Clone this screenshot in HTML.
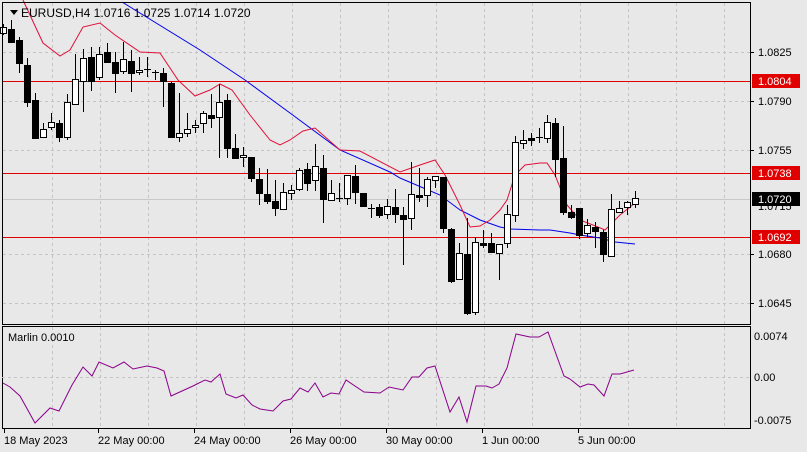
<!DOCTYPE html>
<html><head><meta charset="utf-8"><style>
html,body{margin:0;padding:0;background:#e8e8e8;}
svg{display:block;font-family:"Liberation Sans",sans-serif;}
</style></head><body>
<svg id="s" width="807" height="452" viewBox="0 0 807 452" xmlns="http://www.w3.org/2000/svg">
<rect width="807" height="452" fill="#e8e8e8"/>
<g id="grid" stroke="#c4c4c4" stroke-dasharray="3,3" stroke-width="1"></g>
<line x1="2" y1="199.5" x2="750" y2="199.5" stroke="#c8c8c8"/>
<g stroke="#e00000" stroke-width="1">
<line x1="2" y1="81.5" x2="750" y2="81.5"/>
<line x1="2" y1="173.5" x2="750" y2="173.5"/>
<line x1="2" y1="237.5" x2="750" y2="237.5"/>
</g>
<polyline fill="none" stroke="#0000ee" stroke-width="1" points="122,2 200,50 245,80 290,113 340,150 390,172 400,178 440,195 460,210 480,220 500,227 510,229 540,230 550,230 570,233 580,235 600,238 615,242 635,244"/>
<polyline fill="none" stroke="#e0103a" stroke-width="1" points="23,0 43,43 60,56 70,50 83,27 100,23 115,35 140,52 160,53 178,80 195,96 210,90 220,84 232,90 250,115 270,140 280,145 290,140 303,131 315,128 340,150 360,151 400,172 420,165 435,160 445,175 460,205 470,227 480,226 490,220 500,210 507,200 515,175 525,165 540,163 547,163 555,175 567,205 580,220 598,227 605,230 620,215 635,203"/>
<g id="c"></g>
<rect x="2.5" y="2.5" width="748" height="322" fill="none" stroke="#000"/>
<rect x="2.5" y="326.5" width="748" height="102" fill="none" stroke="#000"/>
<line x1="2" y1="377.5" x2="750" y2="377.5" stroke="#c4c4c4" stroke-dasharray="3,3"/>
<polyline fill="none" stroke="#8b008b" stroke-width="1" points="3,383 10,387 20,396 35,423 50,408 59,411 72,385 83,367 92,376 99,362 113,368 124,362 133,369 147,366 157,368 164,371 171,396 193,386 205,380 211,382 220,374 226,394 236,398 243,395 252,405 260,409 273,411 283,401 291,399 300,388 308,392 315,383 323,397 331,393 339,394 346,380 364,392 380,393 389,387 403,390 412,377 419,377 427,368 435,366 450,412 459,397 467,422 476,386 486,386 492,388 499,384 507,368 516,334 530,337 539,337 548,332 564,376 570,379 580,387 588,384 594,385 604,396 612,374 620,374 634,370"/>
<path d="M10,10 L18,10 L14,15 Z" fill="#000"/>
<text x="21" y="17" font-size="12" fill="#000">EURUSD,H4   1.0716 1.0725 1.0714 1.0720</text>
<text x="8" y="341" font-size="11" fill="#000">Marlin 0.0010</text>
<g font-size="11" fill="#000">
<text x="758" y="56">1.0825</text>
<text x="758" y="105">1.0790</text>
<text x="758" y="154">1.0755</text>
<text x="758" y="210">1.0715</text>
<text x="758" y="258">1.0680</text>
<text x="758" y="307">1.0645</text>
<text x="754" y="340">0.0074</text>
<text x="754" y="381">0.00</text>
<text x="754" y="424">-0.0075</text>
</g>
<rect x="752" y="74" width="48" height="14" fill="#e00000"/>
<text x="758" y="85" font-size="11" fill="#fff">1.0804</text>
<rect x="752" y="166" width="48" height="14" fill="#e00000"/>
<text x="758" y="177" font-size="11" fill="#fff">1.0738</text>
<rect x="752" y="230" width="48" height="14" fill="#e00000"/>
<text x="758" y="241" font-size="11" fill="#fff">1.0692</text>
<rect x="752" y="192" width="48" height="14" fill="#000"/>
<text x="758" y="203" font-size="11" fill="#fff">1.0720</text>
<g stroke="#000">
<line x1="750" y1="52.5" x2="754" y2="52.5"/><line x1="750" y1="101.5" x2="754" y2="101.5"/><line x1="750" y1="150.5" x2="754" y2="150.5"/><line x1="750" y1="254.5" x2="754" y2="254.5"/><line x1="750" y1="303.5" x2="754" y2="303.5"/>
</g>
<g font-size="11" fill="#000">
<text x="4" y="444">18 May 2023</text>
<text x="98" y="444">22 May 00:00</text>
<text x="194" y="444">24 May 00:00</text>
<text x="290" y="444">26 May 00:00</text>
<text x="386" y="444">30 May 00:00</text>
<text x="482" y="444">1 Jun 00:00</text>
<text x="578" y="444">5 Jun 00:00</text>
</g>
<g id="ticks" stroke="#000"></g>
</svg>
<script>
var NS="http://www.w3.org/2000/svg";
function el(p,t,a){var e=document.createElementNS(NS,t);for(var k in a)e.setAttribute(k,a[k]);p.appendChild(e);return e;}
var g=document.getElementById('grid'),tk=document.getElementById('ticks');
for(var x=52;x<750;x+=48){el(g,'line',{x1:x+.5,y1:3,x2:x+.5,y2:324});el(g,'line',{x1:x+.5,y1:327,x2:x+.5,y2:428});}
[52,101,150,254,303].forEach(function(y){el(g,'line',{x1:3,y1:y+.5,x2:750,y2:y+.5});});
[4,98,194,290,386,482,578].forEach(function(x){el(tk,'line',{x1:x+.5,y1:429,x2:x+.5,y2:433});});
// [x, open, close, high, low] in px (white if close<open in y)
var C=[[3,33,27,24,35],[11,29,42,20,42],[19,40,63,37,73],[27,65,102,58,107],[35,100,138,93,138],[43,137,129,123,138],[51,127,122,113,130],[59,123,137,120,142],[67,137,102,94,140],[75,104,79,54,104],[83,81,58,49,112],[91,57,81,47,91],[99,77,54,47,80],[107,52,62,43,63],[115,62,73,52,93],[123,71,59,42,74],[131,61,73,50,92],[139,72,70,57,75],[147,69,70,57,77],[155,72,72,70,80],[163,73,81,68,107],[171,83,137,82,137],[179,137,133,93,142],[187,133,129,113,137],[195,127,125,120,133],[203,123,113,111,133],[211,115,118,94,128],[219,117,102,84,158],[227,100,148,94,158],[235,148,158,134,158],[243,157,155,147,167],[251,157,178,157,182],[259,179,193,168,205],[267,194,201,169,204],[275,201,208,180,216],[283,209,192,183,210],[291,193,190,185,200],[299,189,170,168,191],[307,169,183,163,191],[315,180,166,144,191],[323,168,199,155,223],[331,200,193,180,200],[339,198,198,183,202],[347,198,175,175,205],[355,176,192,165,204],[363,193,206,193,206],[371,208,208,204,218],[379,207,215,204,218],[387,214,206,199,219],[395,207,214,189,223],[403,215,219,207,265],[411,218,194,162,230],[419,195,197,168,202],[427,195,179,177,207],[435,180,176,176,188],[443,177,228,177,233],[451,229,281,228,283],[459,279,253,243,280],[467,254,313,218,315],[475,312,242,237,315],[483,243,245,230,248],[491,243,252,233,253],[499,253,244,244,280],[507,243,214,205,248],[515,215,142,136,222],[523,143,140,130,149],[531,138,140,133,146],[539,137,138,128,143],[547,138,122,115,143],[555,123,159,118,177],[563,158,212,126,215],[571,212,217,205,219],[579,208,235,208,239],[587,233,225,219,237],[595,227,231,222,248],[603,232,254,230,262],[611,256,209,194,256],[619,212,208,201,213],[627,207,202,201,215],[635,204,198,191,208]];
var cg=document.getElementById('c');
C.forEach(function(c){var x=c[0],o=c[1],cl=c[2],h=c[3],l=c[4];
el(cg,'line',{x1:x+.5,y1:h,x2:x+.5,y2:l,stroke:'#000'});
var top=Math.min(o,cl),bh=Math.max(1,Math.abs(o-cl));
var white=cl<o;
if(bh<=1){el(cg,'line',{x1:x-3,y1:top+.5,x2:x+4,y2:top+.5,stroke:'#000'});}
else el(cg,'rect',{x:x-2.5,y:top+.5,width:6,height:bh,fill:white?'#fff':'#000',stroke:'#000'});
});
</script>
</body></html>
